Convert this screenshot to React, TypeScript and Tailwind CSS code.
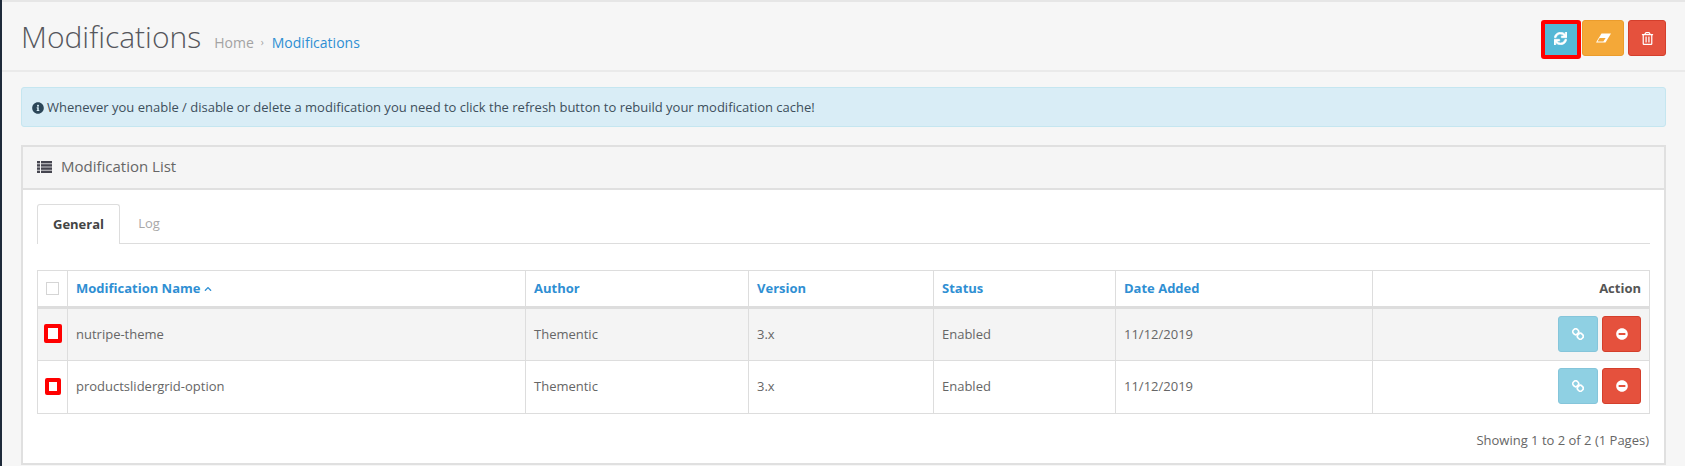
import { FaInfoCircle, FaMinusCircle, FaRegTrashAlt, FaSync, FaChevronUp } from "react-icons/fa";

const rows = ["nutripe-theme", "productslidergrid-option"];

function ListIcon() {
  return (
    <svg width="15" height="12" viewBox="0 0 15 12" fill="currentColor">
      <rect x="0" y="0" width="3" height="2.4" />
      <rect x="4" y="0" width="11" height="2.4" />
      <rect x="0" y="3.2" width="3" height="2.4" />
      <rect x="4" y="3.2" width="11" height="2.4" />
      <rect x="0" y="6.4" width="3" height="2.4" />
      <rect x="4" y="6.4" width="11" height="2.4" />
      <rect x="0" y="9.6" width="3" height="2.4" />
      <rect x="4" y="9.6" width="11" height="2.4" />
    </svg>
  );
}

function EraserIcon() {
  return (
    <svg width="15" height="10" viewBox="0 0 15 10" fill="none">
      <path d="M5.5 0.5H15L9.5 9.5H0L5.5 0.5Z" fill="#ffffff" />
      <path d="M3.6 5H9.6L7.4 8.4H1.5L3.6 5Z" fill="#f4a838" />
    </svg>
  );
}

function ChainIcon() {
  return (
    <svg width="12" height="12" viewBox="0 0 13 13" fill="none" stroke="currentColor" strokeWidth="1.8">
      <rect x="1" y="1" width="6" height="6" rx="2.6" transform="rotate(45 4 4)" />
      <rect x="6" y="6" width="6" height="6" rx="2.6" transform="rotate(45 9 9)" />
    </svg>
  );
}

function HeaderCell({ label, sorted }: { label: string; sorted?: boolean }) {
  return (
    <th className="border border-[#dddddd] border-b-[3px] px-2 text-left align-middle font-bold text-[#2f8fd3]">
      <span className="inline-flex items-center gap-1">
        {label}
        {sorted && <FaChevronUp className="text-[8px]" />}
      </span>
    </th>
  );
}

export default function App() {
  return (
    <div className="h-[466px] overflow-hidden border-l-2 border-[#1e2a3a] bg-[#f6f6f6] font-['Open_Sans',sans-serif] text-[13px] text-[#666666]">
      {/* Page header */}
      <div className="flex h-[72px] items-start justify-between border-t-2 border-b-2 border-t-[#e6e6e6] border-b-[#eaeaea] pr-[19px] pl-[19px]">
        <div className="mt-[20px] flex items-baseline">
          <h1 className="text-[30px] leading-none font-light text-[#55565c]">Modifications</h1>
          <div className="ml-[13px] flex items-center text-[14px] text-[#a3a3a3]">
            Home
            <span className="mx-[7px] text-[10px]">›</span>
            <span className="ml-[1px] text-[#2f8fd3]">Modifications</span>
          </div>
        </div>
        <div className="mt-[18px] flex gap-[1px]">
          <button className="flex h-[39px] w-[40px] items-center justify-center rounded-[3px] border-[4px] border-[#ff0000] bg-[#55b8d6] pr-[2px] pb-[2px] text-[13px] text-white">
            <FaSync stroke="currentColor" strokeWidth={24} />
          </button>
          <button className="flex h-[36px] w-[42px] items-center justify-center rounded-[3px] border border-[#eb9c2c] bg-[#f4a838] text-white">
            <EraserIcon />
          </button>
          <button className="ml-[3px] flex h-[36px] w-[38px] items-center justify-center rounded-[3px] border border-[#d43f2c] bg-[#e5513d] text-[13px] text-white">
            <FaRegTrashAlt />
          </button>
        </div>
      </div>

      <div className="px-[19px] pt-[15px]">
        {/* Info alert */}
        <div className="flex h-[40px] items-center gap-[3px] rounded-[3px] border border-[#c5e6f0] bg-[#d9edf6] px-[10px] pt-[1px] text-[#3d4f5c]">
          <FaInfoCircle className="text-[12px] text-[#2b4658]" />
          Whenever you enable / disable or delete a modification you need to click the refresh button to rebuild your modification cache!
        </div>

        {/* Panel */}
        <div className="mt-[18px] border-2 border-[#e0e0e0]">
          <div className="flex h-[43px] items-center gap-[9px] border-b-2 border-[#e0e0e0] bg-[#f5f5f5] pb-[2px] pl-[14px] text-[15px] text-[#666666]">
            <span className="text-[#45454f]"><ListIcon /></span>
            Modification List
          </div>
          <div className="h-[273px] bg-white px-[14px] pt-[14px]">
            {/* Tabs */}
            <div className="flex h-[40px] border-b border-[#dddddd]">
              <div className="mb-[-1px] flex w-[83px] items-center justify-center rounded-t-[3px] border border-b-0 border-[#dddddd] bg-white font-bold text-[#444444]">
                General
              </div>
              <div className="flex w-[58px] items-center justify-center text-[#a8a8a8]">Log</div>
            </div>

            <table className="mt-[26px] w-[1612px] table-fixed border-collapse">
              <colgroup>
                <col className="w-[30px]" />
                <col className="w-[458px]" />
                <col className="w-[223px]" />
                <col className="w-[185px]" />
                <col className="w-[182px]" />
                <col className="w-[257px]" />
                <col className="w-[277px]" />
              </colgroup>
              <thead>
                <tr className="h-[37px]">
                  <th className="border border-[#dddddd] border-b-[3px] text-center align-middle">
                    <span className="mx-auto block h-[13px] w-[13px] border border-[#d5d5d5] bg-white" />
                  </th>
                  <HeaderCell label="Modification Name" sorted />
                  <HeaderCell label="Author" />
                  <HeaderCell label="Version" />
                  <HeaderCell label="Status" />
                  <HeaderCell label="Date Added" />
                  <th className="border border-[#dddddd] border-b-[3px] px-2 text-right align-middle font-bold text-[#555555]">
                    Action
                  </th>
                </tr>
              </thead>
              <tbody>
                {rows.map((name, i) => (
                  <tr key={name} className={i === 0 ? "h-[53px] bg-[#f4f4f4]" : "h-[53px] bg-white"}>
                    <td className="border border-[#dddddd] pb-[2px] text-center align-middle">
                      <span
                        className={
                          i === 0
                            ? "mx-auto block h-[19px] w-[18px] rounded-[2px] border-[4px] border-[#ff0000] bg-white"
                            : "mx-auto block h-[17px] w-[16px] rounded-[2px] border-[4px] border-[#ff0000] bg-white"
                        }
                      />
                    </td>
                    <td className="border border-[#dddddd] px-2 align-middle">{name}</td>
                    <td className="border border-[#dddddd] px-2 align-middle">Thementic</td>
                    <td className="border border-[#dddddd] px-2 align-middle">3.x</td>
                    <td className="border border-[#dddddd] px-2 align-middle">Enabled</td>
                    <td className="border border-[#dddddd] px-2 align-middle">11/12/2019</td>
                    <td className="border border-[#dddddd] px-2 pb-[2px] align-middle">
                      <div className="flex justify-end gap-[4px]">
                        <button className="flex h-[36px] w-[40px] items-center justify-center rounded-[3px] border border-[#85c5da] bg-[#8fd0e3] text-white">
                          <ChainIcon />
                        </button>
                        <button className="flex h-[36px] w-[39px] items-center justify-center rounded-[3px] border border-[#d43f2c] bg-[#e5513d] text-[12px] text-white">
                          <FaMinusCircle />
                        </button>
                      </div>
                    </td>
                  </tr>
                ))}
              </tbody>
            </table>

            <div className="mt-[17px] w-[1612px] text-right">Showing 1 to 2 of 2 (1 Pages)</div>
          </div>
        </div>
      </div>
    </div>
  );
}
